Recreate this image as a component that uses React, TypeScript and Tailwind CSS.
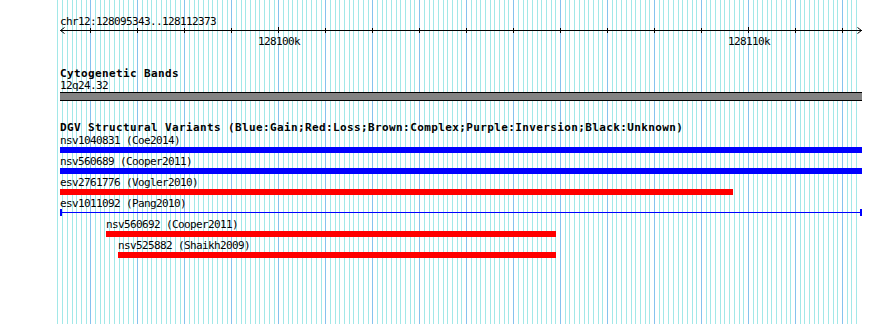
import React from "react";

const START = 128095343;
const END = 128112373;
const X0 = 60;
const SCALE = 800 / (END - START + 1);
const px = (pos: number) => X0 + (pos - START) * SCALE;

const gridLines: { x: number; major: boolean }[] = [];
for (let p = 128095300; p <= 128112300; p += 100) {
  const x = Math.floor(px(p));
  if (x >= 57) gridLines.push({ x, major: p % 1000 === 0 });
}

const ticks: { x: number; major: boolean; label?: string }[] = [];
for (let p = 128096000; p <= 128112000; p += 1000) {
  const x = Math.floor(px(p));
  const major = p % 10000 === 0;
  ticks.push({ x, major, label: major ? `${Math.round(p / 1000)}k` : undefined });
}

type Feature = {
  name: string;
  from: number;
  to: number;
  kind: "blue" | "red" | "line";
};

const features: Feature[] = [
  { name: "nsv1040831 (Coe2014)", from: 60, to: 862, kind: "blue" },
  { name: "nsv560689 (Cooper2011)", from: 60, to: 862, kind: "blue" },
  { name: "esv2761776 (Vogler2010)", from: 60, to: 733, kind: "red" },
  { name: "esv1011092 (Pang2010)", from: 60, to: 862, kind: "line" },
  { name: "nsv560692 (Cooper2011)", from: 106, to: 556, kind: "red" },
  { name: "nsv525882 (Shaikh2009)", from: 118, to: 556, kind: "red" },
];

const mono = "font-['DejaVu_Sans_Mono',monospace] text-[11px] tracking-[-0.62px] text-black";
const monoBold = "font-['DejaVu_Sans_Mono',monospace] font-bold text-[11px] tracking-[0.38px] text-black";

export default function App() {
  return (
    <div className="relative w-[890px] h-[324px] overflow-hidden bg-white">
      <svg className="absolute inset-0" width={890} height={324}>
        {gridLines.map((g, i) => (
          <line
            key={i}
            x1={g.x + 0.5}
            x2={g.x + 0.5}
            y1={0}
            y2={324}
            stroke={g.major ? "#86c2ee" : "#a2e8e8"}
            strokeWidth={1}
          />
        ))}
      </svg>

      <div className="relative flex flex-col pt-[15px]">
        <div className={`${mono} h-[13px] leading-[13px] pl-[60px] whitespace-pre`}>
          chr12:128095343..128112373
        </div>

        <div className="relative h-[20px]">
          <svg className="absolute left-0 top-0 overflow-visible" width={890} height={20}>
            <line x1={60} x2={862} y1={2.5} y2={2.5} stroke="#000" strokeWidth={1} />
            <polyline points="64.5,-0.5 60.5,2.5 64.5,5.5" fill="none" stroke="#000" strokeWidth={1} />
            <polyline points="857.5,-0.5 861.5,2.5 857.5,5.5" fill="none" stroke="#000" strokeWidth={1} />
            {ticks.map((t, i) => (
              <line
                key={i}
                x1={t.x + 0.5}
                x2={t.x + 0.5}
                y1={t.major ? -1 : 0}
                y2={5}
                stroke="#000"
                strokeWidth={1}
              />
            ))}
          </svg>
          {ticks
            .filter((t) => t.label)
            .map((t, i) => (
              <span
                key={i}
                className={`${mono} absolute top-[7px] leading-[13px] whitespace-pre -translate-x-1/2`}
                style={{ left: t.x + 1 }}
              >
                {t.label}
              </span>
            ))}
        </div>

        <div className={`${monoBold} mt-[20px] h-[12px] leading-[12px] pl-[60px] whitespace-pre`}>
          Cytogenetic Bands
        </div>
        <div className={`${mono} h-[12px] leading-[12px] pl-[60px] whitespace-pre`}>12q24.32</div>
        <div className="ml-[60px] w-[802px] h-[9px] border-y border-black bg-[#838383]" />

        <div className={`${monoBold} mt-[21px] h-[12px] leading-[12px] pl-[60px] whitespace-pre`}>
          DGV Structural Variants (Blue:Gain;Red:Loss;Brown:Complex;Purple:Inversion;Black:Unknown)
        </div>

        <div className="mt-[1px] flex flex-col gap-[3px]">
          {features.map((f, i) => (
            <div key={i} className="flex flex-col">
              <div
                className={`${mono} h-[12px] leading-[12px] whitespace-pre`}
                style={{ paddingLeft: f.from }}
              >
                {f.name}
              </div>
              {f.kind === "line" ? (
                <div className="relative h-[6px]" style={{ marginLeft: f.from, width: f.to - f.from }}>
                  <svg className="absolute left-0 top-0 overflow-visible" width={f.to - f.from} height={6}>
                    <line x1={0} x2={f.to - f.from} y1={2.5} y2={2.5} stroke="#0000ff" strokeWidth={1} />
                    <rect x={0} y={-1} width={2} height={7} fill="#0000ff" />
                    <rect x={f.to - f.from - 2} y={-1} width={2} height={7} fill="#0000ff" />
                  </svg>
                </div>
              ) : (
                <div
                  className={`h-[6px] ${f.kind === "blue" ? "bg-[#0000ff]" : "bg-[#ff0000]"}`}
                  style={{ marginLeft: f.from, width: f.to - f.from }}
                />
              )}
            </div>
          ))}
        </div>
      </div>
    </div>
  );
}
